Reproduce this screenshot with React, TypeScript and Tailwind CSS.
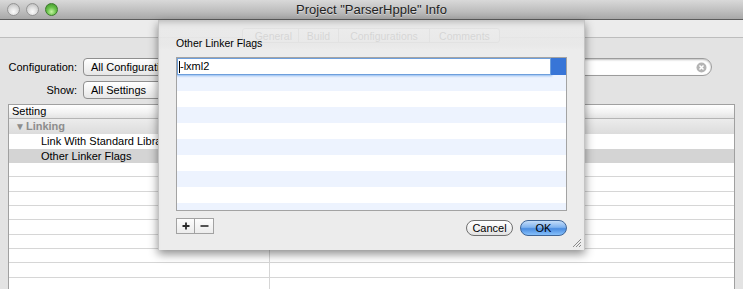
// Xcode "Project Info" window with the Other Linker Flags sheet open

const emptyRows = Array.from({ length: 10 });
const listRows = Array.from({ length: 9 });

function Light({ green }: { green?: boolean }) {
  return (
    <span
      className={`block h-[13px] w-[13px] rounded-full border ${
        green
          ? "border-[#3c7a2c] bg-[radial-gradient(circle_at_50%_70%,#c6f5a4_0%,#6cc44d_45%,#3a8f25_100%)]"
          : "border-[#949494] bg-[radial-gradient(circle_at_50%_70%,#fcfcfc_0%,#dcdcdc_50%,#b3b3b3_100%)]"
      }`}
    />
  );
}

function Popup({ label, width }: { label: string; width: string }) {
  return (
    <div
      className={`flex h-[18px] shrink-0 items-center rounded-[4px] border border-[#8f8f8f] bg-[linear-gradient(to_bottom,#ffffff,#f3f3f3_50%,#e6e6e6)] pl-[7px] ${width}`}
    >
      {label}
    </div>
  );
}

function TabStrip() {
  const tabs = [
    { label: "General", w: "w-[55px]", pad: "justify-end pr-[6px]" },
    { label: "Build", w: "w-[40px]", pad: "justify-center" },
    { label: "Configurations", w: "w-[91px]", pad: "justify-center" },
    { label: "Comments", w: "w-[70px]", pad: "justify-center" },
  ];
  return (
    <div className="relative z-0 flex h-[15px] rounded-[3px] border border-[#9a9a9a] bg-[linear-gradient(to_bottom,#ffffff,#e8e8e8)] text-[10.5px]">
      {tabs.map((t, i) => (
        <div
          key={t.label}
          className={`flex items-center leading-[8px] ${t.w} ${t.pad} ${
            i > 0 ? "border-l border-[#9a9a9a]" : ""
          }`}
        >
          {t.label}
        </div>
      ))}
    </div>
  );
}

function Sheet() {
  return (
    <div className="absolute left-[158px] top-[20px] z-10 flex h-[230px] w-[427px] flex-col border-x border-[#c4c4c4] bg-[linear-gradient(to_bottom,rgba(234,234,234,0.91)_0px,rgba(233,233,233,0.91)_25px,#ececec_30px)] px-[17px] shadow-[0_4px_9px_rgba(0,0,0,0.45),inset_0_7px_6px_-5px_rgba(0,0,0,0.22)]">
      <div className="mt-[19px] text-[10.5px] leading-[9px]">Other Linker Flags</div>

      {/* flags list */}
      <div className="mt-[9px] h-[154px] overflow-hidden border border-[#a3a3a3] bg-white">
        <div className="flex h-[17px]">
          <div className="flex flex-1 items-center border border-[#6e9fdc] bg-white pl-[1px] shadow-[0_0_2px_1px_#8fbaf0]">
            <span className="block h-[12px] w-px bg-black" />
            <span className="leading-none">-lxml2</span>
          </div>
          <div className="w-[15px] bg-[#3875d7]" />
        </div>
        {listRows.map((_, i) => (
          <div
            key={i}
            className={`h-[16px] ${i % 2 === 0 ? "bg-[#edf3fe]" : "bg-white"}`}
          />
        ))}
      </div>

      {/* buttons */}
      <div className="mt-[7px] flex items-start">
        <div className="flex h-[16px] border border-[#a2a2a2] bg-[linear-gradient(to_bottom,#fdfdfd,#ececec)]">
          <div className="flex w-[18px] items-center justify-center border-r border-[#a2a2a2]">
            <svg width="8" height="8" viewBox="0 0 8 8">
              <path d="M4 0.5v7M0.5 4h7" stroke="#2b2b2b" strokeWidth="1.8" />
            </svg>
          </div>
          <div className="flex w-[18px] items-center justify-center">
            <svg width="9" height="8" viewBox="0 0 9 8">
              <path d="M0.5 4h8" stroke="#2b2b2b" strokeWidth="1.6" />
            </svg>
          </div>
        </div>
        <div className="ml-auto mt-[2px] flex gap-[7px]">
          <button className="flex h-[16px] w-[47px] items-center justify-center rounded-full border border-[#6f6f6f] bg-[linear-gradient(to_bottom,#ffffff,#f2f2f2_50%,#e2e2e2)] leading-none">
            Cancel
          </button>
          <button className="flex h-[16px] w-[47px] items-center justify-center rounded-full border border-[#3f6597] bg-[linear-gradient(to_bottom,#c4ddf9_0%,#80b3ef_45%,#4a8ce0_55%,#86c0fb_100%)] leading-none">
            OK
          </button>
        </div>
      </div>

      <svg
        className="absolute bottom-[2px] right-[2px]"
        width="10"
        height="10"
        viewBox="0 0 10 10"
      >
        <path d="M1 9L9 1M4 9L9 4M7 9L9 7" stroke="#8a8a8a" strokeWidth="1" />
      </svg>
    </div>
  );
}

export default function App() {
  return (
    <div className="relative h-[289px] w-[743px] overflow-hidden bg-[#e3e3e3] font-['Liberation_Sans',Arial,sans-serif] text-[11px] text-black">
      {/* title bar */}
      <div className="relative flex h-[20px] items-center border-b border-[#5c5c5c] bg-[linear-gradient(to_bottom,#d9d9d9,#bdbdbd_60%,#a8a8a8)]">
        <div className="flex gap-[6px] pl-[7px]">
          <Light />
          <Light />
          <Light green />
        </div>
        <div className="absolute inset-x-0 text-center text-[13px] leading-[21px] text-[#222] [text-shadow:0_1px_0_rgba(255,255,255,0.45)]">
          Project "ParserHpple" Info
        </div>
      </div>

      {/* toolbar with tabs */}
      <div className="flex h-[18px] justify-center border-b border-[#bdbdbd] bg-[#ececec] pt-[8px]">
        <div className="ml-[-1px]">
          <TabStrip />
        </div>
      </div>

      {/* configuration / show */}
      <div className="mt-[20px] flex items-center">
        <div className="w-[77px] text-right">Configuration:</div>
        <div className="ml-[6px]">
          <Popup label="All Configurations" width="w-[220px]" />
        </div>
        <div className="ml-auto mr-[31px] flex h-[18px] w-[200px] items-center justify-end rounded-full border border-[#9c9c9c] bg-white pr-[4px] shadow-[inset_0_1px_2px_rgba(0,0,0,0.25)]">
          <svg width="11" height="11" viewBox="0 0 11 11">
            <circle cx="5.5" cy="5.5" r="5" fill="#b4b4b4" />
            <path d="M3.5 3.5l4 4M7.5 3.5l-4 4" stroke="#fff" strokeWidth="1.5" />
          </svg>
        </div>
      </div>
      <div className="mt-[5px] flex items-center">
        <div className="w-[77px] text-right">Show:</div>
        <div className="ml-[6px]">
          <Popup label="All Settings" width="w-[200px]" />
        </div>
      </div>

      {/* settings table */}
      <div className="mx-[8px] mt-[5px] border border-[#a0a0a0] bg-white">
        <div className="flex h-[14px] border-b border-[#b5b5b5] bg-[linear-gradient(to_bottom,#ffffff,#f3f3f3_55%,#e4e4e4)] leading-[13px]">
          <div className="w-[261px] border-r border-[#c9c9c9] pl-[3px]">Setting</div>
          <div className="flex-1" />
        </div>
        <div className="flex h-[15px] items-center bg-[linear-gradient(to_bottom,#ececec,#dcdcdc)] pl-[6px] font-bold text-[#8d8d8d]">
          <span className="mr-[1px] text-[10px] leading-none">▼</span>
          Linking
        </div>
        <div className="flex h-[15px] items-center">
          <div className="w-[261px] border-r border-[#dcdcdc] pl-[32px] leading-[15px]">
            Link With Standard Libraries
          </div>
        </div>
        <div className="flex h-[14px] items-center bg-[#d4d4d4]">
          <div className="w-[261px] pl-[32px] leading-[14px]">Other Linker Flags</div>
        </div>
        {emptyRows.map((_, i) => (
          <div key={i} className="flex h-[14.33px] border-b border-[#d6d6d6]">
            <div className="w-[261px] border-r border-[#d6d6d6]" />
          </div>
        ))}
      </div>

      <Sheet />
    </div>
  );
}
